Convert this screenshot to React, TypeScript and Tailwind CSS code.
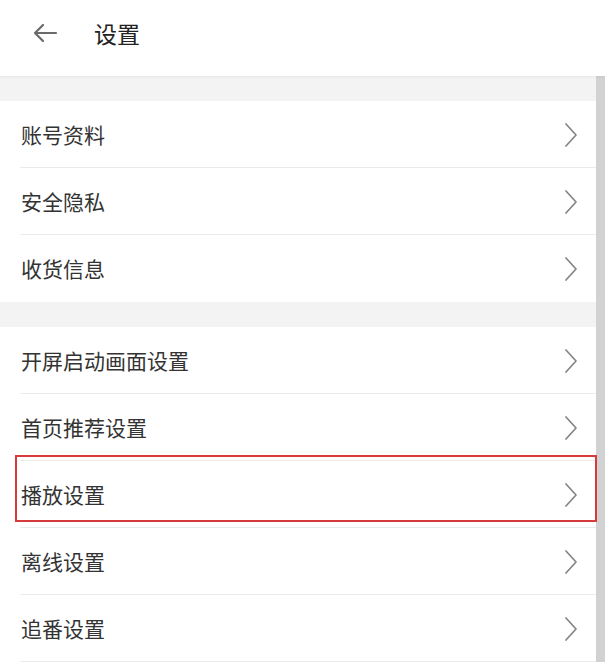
import React from "react";

const Chevron = () => (
  <svg width="14" height="26" viewBox="0 0 14 26" fill="none" className="shrink-0">
    <path d="M2 2 L12 13 L2 24" stroke="#858585" strokeWidth="1.7" strokeLinecap="round" strokeLinejoin="round" />
  </svg>
);

const Row = ({ label, last, highlight }: { label: string; last?: boolean; highlight?: boolean }) => (
  <div className="relative h-[67px] flex items-center pl-[21px] pr-[18px]">
    <span className="flex-1 text-[21px] text-[#333333] leading-none">{label}</span>
    <Chevron />
    {!last && <div className="absolute left-[20px] right-0 bottom-0 h-px bg-[#ebebeb]" />}
    {highlight && <div className="absolute left-[15px] right-[-1px] top-[-6px] bottom-[6px] border-2 border-[#d63a3a]" />}
  </div>
);

export default function App() {
  return (
    <div className="w-[605px] h-[664px] overflow-hidden bg-white" style={{ fontFamily: '"Noto Sans CJK SC", "Noto Sans", sans-serif' }}>
      <div className="h-[76px] flex items-center pb-[10px] bg-white relative z-10 shadow-[0_1px_3px_rgba(0,0,0,0.06)]">
        <svg width="26" height="20" viewBox="0 0 26 20" className="ml-[32px]" fill="none">
          <path d="M24 10 H3 M11 2 L3 10 L11 18" stroke="#6a6a6a" strokeWidth="2.2" strokeLinecap="round" strokeLinejoin="round" />
        </svg>
        <span className="ml-[36px] text-[23px] text-[#222222] leading-none">设置</span>
      </div>
      <div className="flex">
        <div className="flex-1">
          <div className="h-[25px] bg-[#f3f3f3]" />
          <Row label="账号资料" />
          <Row label="安全隐私" />
          <Row label="收货信息" last />
          <div className="h-[25px] bg-[#f3f3f3]" />
          <Row label="开屏启动画面设置" />
          <Row label="首页推荐设置" />
          <Row label="播放设置" highlight />
          <Row label="离线设置" />
          <Row label="追番设置" />
        </div>
        <div className="w-[9px] bg-[#d2d2d2]" />
      </div>
    </div>
  );
}
